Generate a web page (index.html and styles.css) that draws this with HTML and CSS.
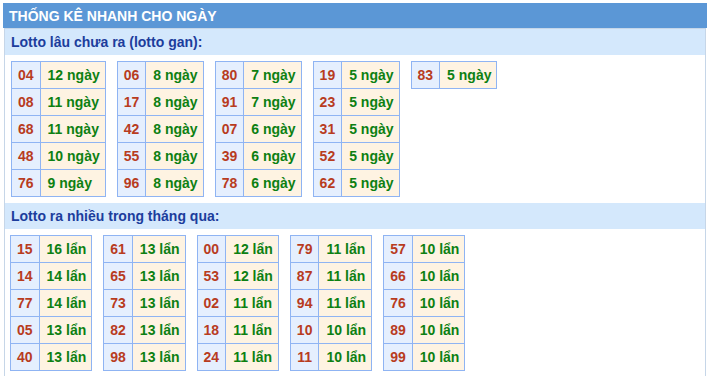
FILE: index.html
```html
<!DOCTYPE html>
<html lang="vi">
<head>
<meta charset="utf-8">
<title>Thống kê nhanh</title>
<link rel="stylesheet" href="styles.css">
</head>
<body>
<div class="wrap">
  <div class="head">THỐNG KÊ NHANH CHO NGÀY</div>
  <div class="box">
    <div class="sub">Lotto lâu chưa ra (lotto gan):</div>
    <div class="tables">
      <table class="st">
        <tr><td class="n">04</td><td class="v">12 ngày</td></tr>
        <tr><td class="n">08</td><td class="v">11 ngày</td></tr>
        <tr><td class="n">68</td><td class="v">11 ngày</td></tr>
        <tr><td class="n">48</td><td class="v">10 ngày</td></tr>
        <tr><td class="n">76</td><td class="v">9 ngày</td></tr>
      </table>
      <table class="st">
        <tr><td class="n">06</td><td class="v">8 ngày</td></tr>
        <tr><td class="n">17</td><td class="v">8 ngày</td></tr>
        <tr><td class="n">42</td><td class="v">8 ngày</td></tr>
        <tr><td class="n">55</td><td class="v">8 ngày</td></tr>
        <tr><td class="n">96</td><td class="v">8 ngày</td></tr>
      </table>
      <table class="st">
        <tr><td class="n">80</td><td class="v">7 ngày</td></tr>
        <tr><td class="n">91</td><td class="v">7 ngày</td></tr>
        <tr><td class="n">07</td><td class="v">6 ngày</td></tr>
        <tr><td class="n">39</td><td class="v">6 ngày</td></tr>
        <tr><td class="n">78</td><td class="v">6 ngày</td></tr>
      </table>
      <table class="st">
        <tr><td class="n">19</td><td class="v">5 ngày</td></tr>
        <tr><td class="n">23</td><td class="v">5 ngày</td></tr>
        <tr><td class="n">31</td><td class="v">5 ngày</td></tr>
        <tr><td class="n">52</td><td class="v">5 ngày</td></tr>
        <tr><td class="n">62</td><td class="v">5 ngày</td></tr>
      </table>
      <table class="st">
        <tr><td class="n">83</td><td class="v">5 ngày</td></tr>
      </table>
    </div>
    <div class="sub">Lotto ra nhiều trong tháng qua:</div>
    <div class="tables second">
      <table class="st">
        <tr><td class="n">15</td><td class="v">16 lẩn</td></tr>
        <tr><td class="n">14</td><td class="v">14 lẩn</td></tr>
        <tr><td class="n">77</td><td class="v">14 lẩn</td></tr>
        <tr><td class="n">05</td><td class="v">13 lẩn</td></tr>
        <tr><td class="n">40</td><td class="v">13 lẩn</td></tr>
      </table>
      <table class="st">
        <tr><td class="n">61</td><td class="v">13 lẩn</td></tr>
        <tr><td class="n">65</td><td class="v">13 lẩn</td></tr>
        <tr><td class="n">73</td><td class="v">13 lẩn</td></tr>
        <tr><td class="n">82</td><td class="v">13 lẩn</td></tr>
        <tr><td class="n">98</td><td class="v">13 lẩn</td></tr>
      </table>
      <table class="st">
        <tr><td class="n">00</td><td class="v">12 lẩn</td></tr>
        <tr><td class="n">53</td><td class="v">12 lẩn</td></tr>
        <tr><td class="n">02</td><td class="v">11 lẩn</td></tr>
        <tr><td class="n">18</td><td class="v">11 lẩn</td></tr>
        <tr><td class="n">24</td><td class="v">11 lẩn</td></tr>
      </table>
      <table class="st">
        <tr><td class="n">79</td><td class="v">11 lẩn</td></tr>
        <tr><td class="n">87</td><td class="v">11 lẩn</td></tr>
        <tr><td class="n">94</td><td class="v">11 lẩn</td></tr>
        <tr><td class="n">10</td><td class="v">10 lẩn</td></tr>
        <tr><td class="n">11</td><td class="v">10 lẩn</td></tr>
      </table>
      <table class="st">
        <tr><td class="n">57</td><td class="v">10 lẩn</td></tr>
        <tr><td class="n">66</td><td class="v">10 lẩn</td></tr>
        <tr><td class="n">76</td><td class="v">10 lẩn</td></tr>
        <tr><td class="n">89</td><td class="v">10 lẩn</td></tr>
        <tr><td class="n">99</td><td class="v">10 lẩn</td></tr>
      </table>
    </div>
  </div>
</div>
</body>
</html>
```
FILE: styles.css
```css
html, body {
  margin: 0;
  padding: 0;
  background: #ffffff;
}
body {
  font-family: "Liberation Sans", Arial, sans-serif;
  font-size: 14px;
  font-weight: bold;
}
.wrap {
  margin: 3px 3px 0 3px;
}
.head {
  height: 25px;
  line-height: 26px;
  background: #5b97d6;
  color: #ffffff;
  padding-left: 6px;
  font-size: 14px;
}
.box {
  margin: 0 1px;
  border: 1px solid #c6d6e8;
  border-bottom: none;
  height: 348px;
}
.sub {
  height: 26px;
  line-height: 26px;
  background: #d4e8fc;
  color: #1c3d9c;
  padding-left: 6px;
}
.tables {
  display: flex;
  align-items: flex-start;
  gap: 11px;
  padding: 6px 6px 6px 6px;
}
.tables.second {
  padding-left: 5px;
}
.st {
  border-collapse: collapse;
  border: 1px solid #8fb4f3;
}
.st td {
  border: 1px solid #8fb4f3;
  height: 26px;
  line-height: 26px;
  padding: 0 6px;
  white-space: nowrap;
}
.st td.n {
  background: #e5effe;
  color: #b83c1e;
  text-align: center;
}
.st td.v {
  background: #fef3e2;
  color: #0d8012;
  text-align: left;
  padding: 0 5px 0 7px;
}
```
